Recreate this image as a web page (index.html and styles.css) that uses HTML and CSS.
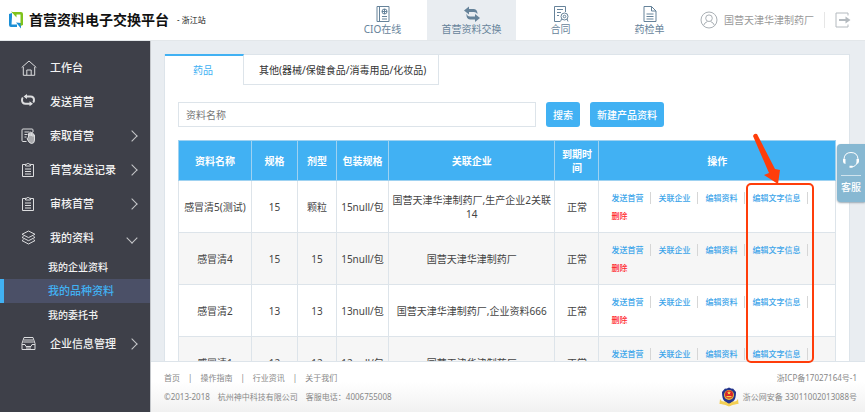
FILE: index.html
```html
<!DOCTYPE html>
<html lang="zh-CN">
<head>
  <meta charset="UTF-8">
  <meta name="viewport" content="width=device-width, initial-scale=1.0">
  <title>首营资料电子交换平台</title>
  <link rel="stylesheet" href="styles.css">
</head>
<body>
  <header class="header">
    <div class="brand">
      <svg class="logo" viewBox="0 0 16 18">
        <path d="M1 3L4 2V6L3.500 13.500H9V16H3Q1 16 1 14z" fill="#1b8fd6"/>
        <path d="M8 11.500L13 12V17.500z" fill="#1b8fd6"/>
        <path d="M4 1H13Q15 1 15 3V14L12.500 15V3.500H8z" fill="#7fc31c"/>
        <path d="M3 .5L8.500 6.500V2z" fill="#7fc31c"/>
      </svg>
      <h1>首营资料电子交换平台</h1>
      <span class="site">- 浙江站</span>
    </div>
    <nav class="top-nav">
      <a href="#">
        <svg viewBox="0 0 16 18"><path d="M2 1.500h12v15H2zM4.500 1.500v15M7 11.500h5M7 14h5"/><circle cx="9.500" cy="6.500" r="2.500"/><path d="M9.500 4v5M7 6.500h5"/></svg>
        <span>CIO在线</span>
      </a>
      <a href="#" class="active">
        <svg viewBox="0 0 16 18"><path class="solid" d="M0 5.500L5 1.500V4H10Q13.500 4.500 13.500 9Q12 7 10 7H5V9.500zM16 13L11 9V11.500H6Q3 11.200 2.500 8.500Q2 14 6 14.500H11V17z"/></svg>
        <span>首营资料交换</span>
      </a>
      <a href="#">
        <svg viewBox="0 0 16 18"><path d="M7 16.500H1.500v-15h11V7M4 4.500h6M4 7.500h4M4 10.500h2M8.500 14l-1 2.500M14 14l1 2.500"/><circle cx="11.500" cy="11.500" r="3.500"/><circle cx="11.500" cy="11.500" r="1.300"/></svg>
        <span>合同</span>
      </a>
      <a href="#">
        <svg viewBox="0 0 16 18"><path d="M2 1.500h7.500l4.500 4.500v10.500H2zM9.500 1.500V6H14M4.500 9h7M4.500 11.500h7M4.500 14h7"/></svg>
        <span>药检单</span>
      </a>
    </nav>
    <div class="user">
      <svg class="avatar" viewBox="0 0 18 18"><circle cx="9" cy="9" r="8"/><circle cx="9" cy="7.200" r="3.300"/><path d="M3.500 14.500Q4.500 11.500 7.500 10.500M14.500 14.500Q13.500 11.500 10.500 10.500"/></svg>
      <span class="user-name">国营天津华津制药厂</span>
      <a href="#" class="logout" aria-label="退出">
        <svg viewBox="0 0 16 16"><path d="M13 3.500V1H1V15H13V12.500"/><path class="arrow-head" d="M4 7H10.500V4.500L15.500 8L10.500 11.500V9H4z"/></svg>
      </a>
    </div>
  </header>

  <div class="layout">
    <aside class="sidebar">
      <a href="#" class="item">
        <svg viewBox="0 0 16 16"><path d="M.7 7.500L8 1l7.300 6.500M2.300 7v8.300h11.400V7M5.800 15v-5h4.400v5"/></svg>
        <span>工作台</span>
      </a>
      <a href="#" class="item">
        <svg viewBox="0 0 16 16"><path class="thick" d="M4 2.500H9.500Q13 2.500 13 6Q13 7.500 12.200 8.500M10 9.700H4.500Q1 9.700 1 6Q1 4.500 1.800 3.500"/><path class="solid" d="M6 0L2.500 2.500L6 5zM8.500 7.200L12 9.700L8.500 12.200z"/></svg>
        <span>发送首营</span>
      </a>
      <a href="#" class="item">
        <svg viewBox="0 0 16 16"><path d="M5.500 13.500H2Q1 13.500 1 12.500V2Q1 1 2 1H11Q12 1 12 2V4M3.500 4h5M3.500 6.500h3M3.500 9h2"/><path class="hand" d="M6 10.500L7.500 9.500V5.500q.8-1 1.500 0V8V4.500q.8-1 1.500 0V8V5q.8-.8 1.500 0V8.500V6.500q1-.5 1.500 .5V12q0 3.500-3 3.500Q8 15.500 6 10.500z"/></svg>
        <span>索取首营</span>
        <i class="chevron"></i>
      </a>
      <a href="#" class="item">
        <svg viewBox="0 0 16 16"><path d="M4 2.500H1.500v12h11v-12H10M4.500 4V2.200H6Q7 0 8 2.200H9.500V4zM4 7h6M4 9.500h6M4 12h6"/></svg>
        <span>首营发送记录</span>
        <i class="chevron"></i>
      </a>
      <a href="#" class="item">
        <svg viewBox="0 0 16 16"><path d="M4 2.500H1.500v12h11v-12H10M4.500 4V2.200H6Q7 0 8 2.200H9.500V4zM4 7h6M4 9.500h6M4 12h6"/></svg>
        <span>审核首营</span>
        <i class="chevron"></i>
      </a>
      <a href="#" class="item">
        <svg viewBox="0 0 16 16"><path d="M7.500 1L14 4.300L7.500 7.600L1 4.300zM2.500 6.500L1 7.400L7.500 10.700L14 7.400L12.500 6.500M2.500 9.700L1 10.600L7.500 14L14 10.600L12.500 9.700"/></svg>
        <span>我的资料</span>
        <i class="chevron open"></i>
      </a>
      <div class="submenu">
        <a href="#">我的企业资料</a>
        <a href="#" class="active">我的品种资料</a>
        <a href="#">我的委托书</a>
      </div>
      <a href="#" class="item">
        <svg viewBox="0 0 16 16"><path d="M1 7.500L3 1.500H12L14 7.500V13.500H1zM3 4H12M2.200 6H12.800M1 8.500H4L5 10.500H10L11 8.500H14M5 12H10"/></svg>
        <span>企业信息管理</span>
        <i class="chevron"></i>
      </a>
    </aside>

    <div class="content">
      <main class="main">
        <section class="panel">
          <div class="tabs">
            <a href="#" class="tab active">药品</a>
            <a href="#" class="tab">其他(器械/保健食品/消毒用品/化妆品)</a>
          </div>
          <div class="panel-body">
            <form class="search">
              <input type="text" placeholder="资料名称" aria-label="资料名称">
              <button type="button">搜索</button>
              <button type="button">新建产品资料</button>
            </form>
            <table class="data">
              <colgroup>
                <col class="col-name">
                <col class="col-spec">
                <col class="col-form">
                <col class="col-pack">
                <col>
                <col class="col-date">
                <col class="col-ops">
              </colgroup>
              <thead>
                <tr>
                  <th>资料名称</th>
                  <th>规格</th>
                  <th>剂型</th>
                  <th>包装规格</th>
                  <th>关联企业</th>
                  <th>到期时间</th>
                  <th>操作</th>
                </tr>
              </thead>
              <tbody>
                <tr>
                  <td>感冒清5(测试)</td>
                  <td>15</td>
                  <td>颗粒</td>
                  <td>15null/包</td>
                  <td>国营天津华津制药厂,生产企业2关联14</td>
                  <td>正常</td>
                  <td><div class="ops"><a href="#">发送首营</a><a href="#">关联企业</a><a href="#">编辑资料</a><a href="#">编辑文字信息</a><a href="#" class="delete">删除</a></div></td>
                </tr>
                <tr>
                  <td>感冒清4</td>
                  <td>15</td>
                  <td>15</td>
                  <td>15null/包</td>
                  <td>国营天津华津制药厂</td>
                  <td>正常</td>
                  <td><div class="ops"><a href="#">发送首营</a><a href="#">关联企业</a><a href="#">编辑资料</a><a href="#">编辑文字信息</a><a href="#" class="delete">删除</a></div></td>
                </tr>
                <tr>
                  <td>感冒清2</td>
                  <td>13</td>
                  <td>13</td>
                  <td>13null/包</td>
                  <td>国营天津华津制药厂,企业资料666</td>
                  <td>正常</td>
                  <td><div class="ops"><a href="#">发送首营</a><a href="#">关联企业</a><a href="#">编辑资料</a><a href="#">编辑文字信息</a><a href="#" class="delete">删除</a></div></td>
                </tr>
                <tr>
                  <td>感冒清1</td>
                  <td>12</td>
                  <td>12</td>
                  <td>12null/包</td>
                  <td>国营天津华津制药厂</td>
                  <td>正常</td>
                  <td><div class="ops"><a href="#">发送首营</a><a href="#">关联企业</a><a href="#">编辑资料</a><a href="#">编辑文字信息</a><a href="#" class="delete">删除</a></div></td>
                </tr>
              </tbody>
            </table>
          </div>
        </section>
      </main>

      <footer class="footer">
        <div class="footer-row">
          <div class="footer-links">
            <a href="#">首页</a><span>|</span><a href="#">操作指南</a><span>|</span><a href="#">行业资讯</a><span>|</span><a href="#">关于我们</a>
          </div>
          <span>浙ICP备17027164号-1</span>
        </div>
        <div class="footer-row">
          <div class="company">
            <span>©2013-2018</span>
            <span>杭州神中科技有限公司</span>
            <span>客服电话：4006755008</span>
          </div>
          <div class="police">
            <svg viewBox="0 0 20 20"><path d="M1 12Q3 15 5 14.500H15Q17 15 19 12L19.500 17Q15 16.500 10 19.500Q5 16.500 .5 17z" fill="#f3cf55"/><path d="M10 .5Q12 2 14 1.500L17 5Q17 12 14.500 14Q12 15.500 10 17Q8 15.500 5.500 14Q3 12 3 5L6 1.500Q8 2 10 .5z" fill="#24348c"/><circle cx="10" cy="8" r="5" fill="#e9b93c"/><circle cx="10" cy="7.500" r="4" fill="#d8232a"/><path d="M7.500 9h5v1.200h-5zM10 4l.6 1.300h1.300l-1 .9.400 1.300L10 6.800l-1.300.7.400-1.300-1-.9h1.300z" fill="#f7d94c"/><path d="M2 15Q7 14.500 10 16.800Q13 14.500 18 15L18.500 17Q14 16.500 10 19Q6 16.500 1.500 17z" fill="#f3cf55"/></svg>
            <span>浙公网安备 33011002013088号</span>
          </div>
        </div>
      </footer>
    </div>
  </div>

  <a href="#" class="service">
    <svg viewBox="0 0 18 18"><path d="M2 9V8Q2.500 1.500 9 1.500T16 8V9M15.500 11Q14 15.500 10 15.800"/><path class="solid" d="M1 8h2.500v5Q1 12.500 1 10.500zM17 8h-2.500v5Q17 12.500 17 10.500zM7.500 14.800h3v2h-3z"/></svg>
    <span>客服</span>
  </a>

  <!-- highlight round the new column of links -->
  <svg class="callout" viewBox="0 0 70 232">
    <rect x="2" y="52" width="66" height="178" rx="4"/>
    <path d="M8 4Q9 1 12 2L30 37L35 38L33 52L19 43L24 41z"/>
  </svg>
</body>
</html>
```

FILE: styles.css
```css
:root {
  --blue: #41b1f3;
  --line: #dde4ea;
  --page: #e9edf1;
  --dark: #3e4049;
  --slate: #66839a;
  --mark: #ff3d0a;
}

* {
  box-sizing: border-box;
}

body {
  margin: 0;
  height: 100vh;
  display: flex;
  flex-direction: column;
  overflow: hidden;
  font-family: "Noto Sans", "Noto Sans CJK SC", sans-serif;
  font-size: 10px;
  line-height: 14px;
  color: #444;
  background-color: var(--page);
}

a {
  color: inherit;
  text-decoration: none;
}

svg {
  flex: none;
  fill: none;
  stroke: currentColor;
}

.solid {
  fill: currentColor;
  stroke: none;
}

/* header */
.header {
  display: flex;
  height: 41px;
  flex: none;
  background-color: #fff;
  border-bottom: 1px solid #e3e7ea;
}

.brand {
  display: flex;
  align-items: center;
  padding-left: 8px;
  color: #111;
}

.logo {
  width: 16px;
  height: 18px;
  margin-right: 5px;
  stroke: none;
}

.brand h1 {
  margin: 0;
  font-size: 14px;
  line-height: 20px;
  font-weight: 700;
}

.site {
  margin-left: 8px;
  font-size: 8px;
}

.top-nav {
  display: flex;
  margin-left: auto;
}

.top-nav a {
  width: 89px;
  display: flex;
  flex-direction: column;
  align-items: center;
  padding-top: 5px;
  line-height: 12px;
  color: var(--slate);
}

.top-nav svg {
  width: 16px;
  height: 18px;
}

.top-nav .active {
  background-color: var(--page);
}

.user {
  display: flex;
  align-items: center;
  padding: 0 14px 0 6px;
  color: #999;
}

.avatar {
  width: 18px;
  height: 18px;
  margin-right: 6px;
  color: #aab0b5;
}

.logout {
  display: flex;
  margin-left: 10px;
  padding-left: 10px;
  border-left: 1px solid #e6e6e6;
  color: #b4babf;
}

.logout svg {
  width: 16px;
  height: 16px;
}

.arrow-head {
  fill: currentColor;
  stroke: none;
}

/* sidebar */
.layout {
  display: flex;
  flex: 1;
  min-height: 0;
}

.sidebar {
  width: 151px;
  flex: none;
  padding-top: 10px;
  background-color: var(--dark);
  border-right: 1px solid #c4c7cb;
  color: #f2f2f2;
}

.item {
  display: flex;
  align-items: center;
  height: 34px;
  padding: 0 14px 0 21px;
  font-size: 11px;
  font-weight: 500;
}

.item svg {
  width: 16px;
  height: 16px;
  margin-right: 13px;
  color: #dcdddf;
}

.thick {
  stroke-width: 2;
}

.hand {
  fill: #a9aaad;
  stroke: #dcdddf;
}

.chevron {
  width: 8px;
  height: 8px;
  margin-left: auto;
  border: solid #c6c7ca;
  border-width: 1px 1px 0 0;
  transform: rotate(45deg);
}

.chevron.open {
  transform: rotate(135deg);
}

.submenu a {
  display: block;
  padding-left: 44px;
  border-left: 4px solid transparent;
  line-height: 24px;
  font-weight: 500;
}

.submenu .active {
  border-left-color: var(--blue);
  background-color: #4b5067;
  color: var(--blue);
  font-size: 11px;
}

/* content */
.content {
  flex: 1;
  min-width: 0;
  display: flex;
  flex-direction: column;
}

.main {
  flex: 1;
  min-height: 0;
  overflow: hidden;
  padding: 13px 15px 0 13px;
}

.panel {
  background-color: #fff;
  border: 1px solid var(--line);
  border-top: 0;
}

.tabs {
  display: flex;
  background: linear-gradient(var(--line), var(--line)) top / 100% 1px no-repeat;
}

.tab {
  height: 31px;
  padding: 8px 12px 0 15px;
  border: solid var(--line);
  border-width: 1px 1px 1px 0;
  color: #333;
}

.tab.active {
  width: 79px;
  padding: 7px 2px 0 0;
  border-top: 2px solid var(--blue);
  border-bottom: 0;
  color: var(--blue);
  text-align: center;
}

.panel-body {
  padding: 17px 13px;
}

.search {
  display: flex;
  gap: 10px;
  margin-bottom: 13px;
}

.search input {
  width: 358px;
  height: 25px;
  padding: 0 7px;
  border: 1px solid var(--line);
  font: inherit;
}

.search input::placeholder {
  color: #777;
}

.search button {
  height: 25px;
  padding: 0 7px;
  border: 0;
  border-radius: 3px;
  background-color: var(--blue);
  color: #fff;
  font: inherit;
  font-weight: 500;
}

.data {
  width: 100%;
  table-layout: fixed;
  border-collapse: collapse;
}

.col-name {
  width: 73px;
}

.col-spec {
  width: 46px;
}

.col-form {
  width: 39px;
}

.col-pack {
  width: 52px;
}

.col-date {
  width: 44px;
}

.col-ops {
  width: 36%;
}

.data th,
.data td {
  padding: 0 2px;
  border: 1px solid var(--line);
  text-align: center;
}

.data th {
  height: 40px;
  padding: 0 4px;
  background-color: var(--blue);
  border-color: #9fd2f1;
  color: #fff;
  font-weight: 700;
}

.data td {
  height: 52px;
}

.data tbody tr:nth-child(even) {
  background-color: #f6f6f6;
}

.ops {
  display: flex;
  flex-wrap: wrap;
  row-gap: 6px;
  padding: 0 10px;
  font-size: 8px;
  line-height: 12px;
  font-weight: 500;
  color: #3ca5ea;
}

.ops a {
  margin-right: 7px;
  padding-right: 7px;
  border-right: 1px solid #d6d6d6;
}

.ops .delete {
  margin: 0;
  padding: 0;
  border: 0;
  color: #ff1f2d;
}

/* footer */
.footer {
  flex: none;
  height: 51px;
  padding: 6px 8px 0 13px;
  border-top: 1px solid var(--line);
  background: linear-gradient(#fff 40%, #f1f1f1);
  font-size: 8px;
  line-height: 19px;
  color: #888;
}

.footer-row,
.footer-links,
.company,
.police {
  display: flex;
}

.footer-row {
  justify-content: space-between;
  height: 19px;
}

.footer-links {
  gap: 8px;
}

.company {
  gap: 8px;
}

.police {
  align-items: center;
  gap: 4px;
}

.police svg {
  width: 20px;
  height: 20px;
  stroke: none;
}

/* floating items */
.service {
  position: absolute;
  top: 144px;
  right: 0;
  width: 28px;
  height: 58px;
  padding-top: 7px;
  display: flex;
  flex-direction: column;
  align-items: center;
  border-radius: 4px 0 0 4px;
  background-color: #87b8d2;
  box-shadow: 0 1px 2px #9aa9b3;
  color: #fff;
  font-weight: 500;
}

.service svg {
  width: 18px;
  height: 18px;
  margin-bottom: 6px;
}

.service span {
  padding-top: 4px;
  border-top: 1px solid #d0e3ed;
}

.callout {
  position: absolute;
  top: 132px;
  right: 50px;
  width: 70px;
  height: 232px;
  pointer-events: none;
}

.callout rect {
  stroke: var(--mark);
  stroke-width: 2;
}

.callout path {
  fill: var(--mark);
  stroke: none;
}
```
